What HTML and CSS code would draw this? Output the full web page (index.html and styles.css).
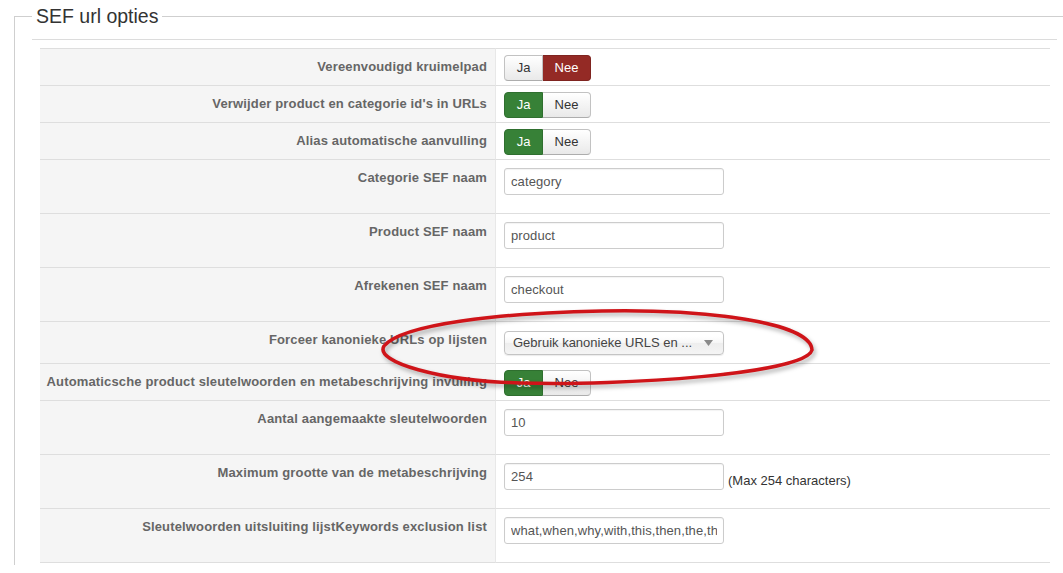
FILE: index.html
```html
<!DOCTYPE html>
<html lang="nl">
<head>
    <meta charset="UTF-8">
    <title>SEF url opties</title>
    <link rel="stylesheet" href="styles.css">
</head>
<body>
    <fieldset class="adminform">
        <legend>SEF url opties</legend>
        <div class="rule"></div>
        <table class="admintable">
            <tr class="row-toggle">
                <td class="key">Vereenvoudigd kruimelpad</td>
                <td class="value">
                    <div class="toggle"><span class="btn">Ja</span><span class="btn no active">Nee</span></div>
                </td>
            </tr>
            <tr class="row-toggle">
                <td class="key">Verwijder product en categorie id's in URLs</td>
                <td class="value">
                    <div class="toggle"><span class="btn yes active">Ja</span><span class="btn">Nee</span></div>
                </td>
            </tr>
            <tr class="row-toggle">
                <td class="key">Alias automatische aanvulling</td>
                <td class="value">
                    <div class="toggle"><span class="btn yes active">Ja</span><span class="btn">Nee</span></div>
                </td>
            </tr>
            <tr class="row-text">
                <td class="key">Categorie SEF naam</td>
                <td class="value"><input type="text" value="category"></td>
            </tr>
            <tr class="row-text">
                <td class="key">Product SEF naam</td>
                <td class="value"><input type="text" value="product"></td>
            </tr>
            <tr class="row-text">
                <td class="key">Afrekenen SEF naam</td>
                <td class="value"><input type="text" value="checkout"></td>
            </tr>
            <tr class="row-select">
                <td class="key">Forceer kanonieke URLs op lijsten</td>
                <td class="value">
                    <div class="chzn-single">
                        <span>Gebruik kanonieke URLS en ...</span>
                        <svg class="arrow" width="9" height="6" viewBox="0 0 9 6"><path d="M0 0 L9 0 L4.5 6 Z" fill="#8a8a8a"/></svg>
                    </div>
                </td>
            </tr>
            <tr class="row-toggle">
                <td class="key">Automaticsche product sleutelwoorden en metabeschrijving invulling</td>
                <td class="value">
                    <div class="toggle"><span class="btn yes active">Ja</span><span class="btn">Nee</span></div>
                </td>
            </tr>
            <tr class="row-text">
                <td class="key">Aantal aangemaakte sleutelwoorden</td>
                <td class="value"><input type="text" value="10"></td>
            </tr>
            <tr class="row-text">
                <td class="key">Maximum grootte van de metabeschrijving</td>
                <td class="value">
                    <div class="field"><input type="text" value="254"><span class="note">(Max 254 characters)</span></div>
                </td>
            </tr>
            <tr class="row-text last">
                <td class="key">Sleutelwoorden uitsluiting lijstKeywords exclusion list</td>
                <td class="value"><input type="text" value="what,when,why,with,this,then,the,th"></td>
            </tr>
        </table>
    </fieldset>

    <svg class="annotation" width="1063" height="573" viewBox="0 0 1063 573">
        <path d="M812 350 C811 322 705 309 602 311 C500 313 402 324 384 346 C374 362 440 381 520 383 C622 386 805 374 812 350"
              fill="none" stroke="#cf1419" stroke-width="3.5" stroke-linecap="round"/>
    </svg>
</body>
</html>
```

FILE: styles.css
```css
body {
    margin: 0;
    font-family: "Liberation Sans", Arial, sans-serif;
    font-size: 13px;
    line-height: 18px;
    color: #333;
    background: #fff;
    position: relative;
    overflow: hidden;
    height: 573px;
}
.adminform {
    margin: 4px 0 0 14px;
    padding: 0 0 0 17px;
    border: 1px solid #cfcfcf;
    border-right: none;
    border-bottom: none;
    min-height: 560px;
}
.adminform legend {
    padding: 0 4px;
    font-size: 19.5px;
    line-height: 24px;
    color: #333;
}
.rule {
    margin-top: 11px;
    width: 1025px;
    border-top: 1px solid #dcdcdc;
}
.admintable {
    margin: 8px 0 0 8px;
    width: 1010px;
    table-layout: fixed;
    border-collapse: separate;
    border-spacing: 0;
}
.admintable td {
    border-top: 1px solid #dedede;
    vertical-align: top;
    box-sizing: border-box;
}
.admintable tr.last td {
    border-bottom: 1px solid #dedede;
}
.admintable td.key {
    width: 456px;
    padding: 9px 8px 0 0;
    background: #f5f5f5;
    border-right: 1px solid #e8e8e8;
    text-align: right;
    white-space: nowrap;
    font-weight: bold;
    letter-spacing: 0.15px;
    color: #666;
}
.admintable td.value {
    padding: 0 8px;
}
.row-toggle td.value {
    padding-top: 6px;
    padding-bottom: 4px;
}
.row-text td.value {
    padding-top: 8px;
    padding-bottom: 18px;
}
.row-select td.value {
    padding-top: 9px;
    padding-bottom: 8px;
}
.toggle {
    display: flex;
    width: 87px;
    height: 26px;
}
.toggle .btn {
    box-sizing: border-box;
    height: 26px;
    line-height: 24px;
    text-align: center;
    color: #333;
    background: linear-gradient(#ffffff, #e9e9e9);
    border: 1px solid #c2c2c2;
    border-bottom-color: #adadad;
}
.toggle .btn:first-child {
    width: 39px;
    border-radius: 4px 0 0 4px;
}
.toggle .btn:last-child {
    width: 48px;
    border-left: none;
    border-radius: 0 4px 4px 0;
}
.toggle .btn.yes.active {
    background: #378137;
    border-color: #2f6f2f;
    color: #fff;
}
.toggle .btn.no.active {
    background: #942a25;
    border-color: #7f2420;
    color: #fff;
}
input[type="text"] {
    display: block;
    box-sizing: border-box;
    width: 220px;
    height: 27px;
    margin: 0;
    padding: 0 6px;
    border: 1px solid #cccccc;
    border-radius: 3px;
    font-family: "Liberation Sans", Arial, sans-serif;
    font-size: 13px;
    letter-spacing: 0.1px;
    color: #555;
    background: #fff;
    box-shadow: inset 0 1px 1px rgba(0, 0, 0, 0.05);
}
.field {
    display: flex;
    align-items: flex-start;
    gap: 4px;
}
.note {
    padding-top: 9px;
    color: #333;
}
.chzn-single {
    box-sizing: border-box;
    display: flex;
    align-items: center;
    justify-content: space-between;
    width: 220px;
    height: 24px;
    padding: 0 10px 0 8px;
    border: 1px solid #c4c4c4;
    border-radius: 4px;
    background: linear-gradient(#ffffff 20%, #f6f6f6 50%, #eeeeee 52%, #f4f4f4 100%);
    box-shadow: 0 1px 1px rgba(0, 0, 0, 0.08);
    color: #444;
}
.annotation {
    position: absolute;
    top: 0;
    left: 0;
    pointer-events: none;
    filter: drop-shadow(2px 3px 2px rgba(0, 0, 0, 0.3));
}
```
